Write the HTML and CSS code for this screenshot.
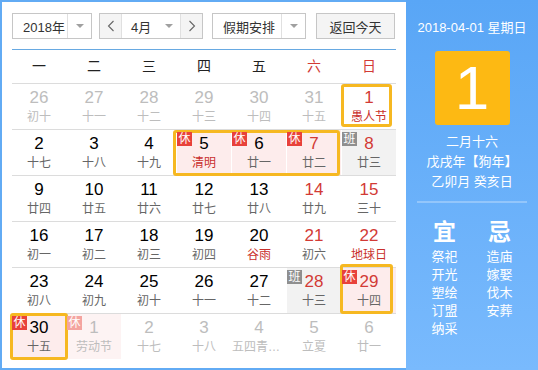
FILE: index.html
```html
<!DOCTYPE html>
<html lang="zh-CN">
<head>
<meta charset="utf-8">
<title>万年历</title>
<link rel="stylesheet" href="styles.css">
</head>
<body>
<div class="cal">
  <div class="main">
    <div class="toolbar">
      <div class="select year"><span class="sel-text">2018年</span><span class="sel-arrow"><i class="tri"></i></span></div>
      <div class="month">
        <span class="nav prev"><svg width="8" height="12" viewBox="0 0 8 12"><polyline points="6.5,1 1.5,6 6.5,11" fill="none" stroke="#666" stroke-width="1.1"/></svg></span>
        <span class="month-text">4月<i class="tri"></i></span>
        <span class="nav next"><svg width="8" height="12" viewBox="0 0 8 12"><polyline points="1.5,1 6.5,6 1.5,11" fill="none" stroke="#666" stroke-width="1.1"/></svg></span>
      </div>
      <div class="select holiday"><span class="sel-text">假期安排</span><span class="sel-arrow"><i class="tri"></i></span></div>
      <button class="today-btn">返回今天</button>
    </div>
    <div class="rule"></div>
    <div class="weekdays">
      <span>一</span><span>二</span><span>三</span><span>四</span><span>五</span><span class="red">六</span><span class="red">日</span>
    </div>

    <div class="week">
      <div class="d other"><b class="n">26</b><span class="l">初十</span></div>
      <div class="d other"><b class="n">27</b><span class="l">十一</span></div>
      <div class="d other"><b class="n">28</b><span class="l">十二</span></div>
      <div class="d other"><b class="n">29</b><span class="l">十三</span></div>
      <div class="d other"><b class="n">30</b><span class="l">十四</span></div>
      <div class="d other"><b class="n">31</b><span class="l">十五</span></div>
      <div class="d red fest"><i class="box box-a"></i><b class="n">1</b><span class="l">愚人节</span></div>
    </div>

    <div class="week">
      <div class="d"><b class="n">2</b><span class="l">十七</span></div>
      <div class="d"><b class="n">3</b><span class="l">十八</span></div>
      <div class="d"><b class="n">4</b><span class="l">十九</span></div>
      <div class="d rest fest"><i class="tag">休</i><b class="n">5</b><span class="l">清明</span></div>
      <div class="d rest"><i class="tag">休</i><b class="n">6</b><span class="l">廿一</span></div>
      <div class="d rest red"><i class="tag">休</i><b class="n">7</b><span class="l">廿二</span></div>
      <div class="d work red"><i class="tag ban">班</i><b class="n">8</b><span class="l">廿三</span></div>
      <i class="range"></i>
    </div>

    <div class="week">
      <div class="d"><b class="n">9</b><span class="l">廿四</span></div>
      <div class="d"><b class="n">10</b><span class="l">廿五</span></div>
      <div class="d"><b class="n">11</b><span class="l">廿六</span></div>
      <div class="d"><b class="n">12</b><span class="l">廿七</span></div>
      <div class="d"><b class="n">13</b><span class="l">廿八</span></div>
      <div class="d red"><b class="n">14</b><span class="l">廿九</span></div>
      <div class="d red"><b class="n">15</b><span class="l">三十</span></div>
    </div>

    <div class="week">
      <div class="d"><b class="n">16</b><span class="l">初一</span></div>
      <div class="d"><b class="n">17</b><span class="l">初二</span></div>
      <div class="d"><b class="n">18</b><span class="l">初三</span></div>
      <div class="d"><b class="n">19</b><span class="l">初四</span></div>
      <div class="d fest"><b class="n">20</b><span class="l">谷雨</span></div>
      <div class="d red"><b class="n">21</b><span class="l">初六</span></div>
      <div class="d red fest"><b class="n">22</b><span class="l">地球日</span></div>
    </div>

    <div class="week">
      <div class="d"><b class="n">23</b><span class="l">初八</span></div>
      <div class="d"><b class="n">24</b><span class="l">初九</span></div>
      <div class="d"><b class="n">25</b><span class="l">初十</span></div>
      <div class="d"><b class="n">26</b><span class="l">十一</span></div>
      <div class="d"><b class="n">27</b><span class="l">十二</span></div>
      <div class="d work red"><i class="tag ban">班</i><b class="n">28</b><span class="l">十三</span></div>
      <div class="d rest red"><i class="box box-b"></i><i class="tag">休</i><b class="n">29</b><span class="l">十四</span></div>
    </div>

    <div class="week last">
      <div class="d rest"><i class="box box-c"></i><i class="tag">休</i><b class="n">30</b><span class="l">十五</span></div>
      <div class="d other rest-faded"><i class="tag faded">休</i><b class="n">1</b><span class="l">劳动节</span></div>
      <div class="d other"><b class="n">2</b><span class="l">十七</span></div>
      <div class="d other"><b class="n">3</b><span class="l">十八</span></div>
      <div class="d other"><b class="n">4</b><span class="l">五四青年节</span></div>
      <div class="d other"><b class="n">5</b><span class="l">立夏</span></div>
      <div class="d other"><b class="n">6</b><span class="l">廿一</span></div>
    </div>
  </div>

  <div class="side">
    <div class="date">2018-04-01 星期日</div>
    <div class="big">1</div>
    <div class="lunar">
      <div>二月十六</div>
      <div>戊戌年【狗年】</div>
      <div>乙卯月 癸亥日</div>
    </div>
    <div class="sep"></div>
    <div class="yj">
      <div class="yj-col">
        <div class="yj-head">宜</div>
        <div class="yj-item">祭祀</div>
        <div class="yj-item">开光</div>
        <div class="yj-item">塑绘</div>
        <div class="yj-item">订盟</div>
        <div class="yj-item">纳采</div>
      </div>
      <div class="yj-col">
        <div class="yj-head">忌</div>
        <div class="yj-item">造庙</div>
        <div class="yj-item">嫁娶</div>
        <div class="yj-item">伐木</div>
        <div class="yj-item">安葬</div>
      </div>
    </div>
  </div>
</div>
</body>
</html>
```

FILE: styles.css
```css
* { box-sizing: border-box; margin: 0; padding: 0; }
html, body { width: 538px; height: 370px; overflow: hidden; background: #fff; }
body { font-family: "Liberation Sans", "Noto Sans CJK SC", sans-serif; color: #000; }

.cal { display: flex; width: 538px; height: 370px; }

.main {
  width: 407px;
  border: 2px solid #62abf4;
  border-right: 0;
  padding: 11px 10px 0;
}

/* toolbar */
.toolbar { display: flex; height: 26px; font-size: 13px; color: #333; margin-bottom: 10px; }
.select { display: flex; border: 1px solid #c6c6c6; background: #fff; }
.year { width: 80px; margin-right: 7px; }
.holiday { width: 94px; margin-right: 10px; }
.sel-text { flex: 1; display: flex; align-items: center; padding-left: 10px; }
.sel-arrow { width: 24px; border-left: 1px solid #e0e0e0; display: flex; align-items: center; justify-content: center; }
.tri { display: block; width: 0; height: 0; border-left: 4px solid transparent; border-right: 4px solid transparent; border-top: 4px solid #a0a0a0; }

.month { display: flex; width: 104px; margin-right: 9px; border: 1px solid #c6c6c6; }
.nav { width: 22px; background: #f4f4f4; display: flex; align-items: center; justify-content: center; }
.prev { border-right: 1px solid #e0e0e0; }
.next { border-left: 1px solid #e0e0e0; }
.month-text { flex: 1; display: flex; align-items: center; padding-left: 9px; gap: 14px; background: #fff; }

.today-btn {
  width: 79px; border: 1px solid #c6c6c6; background: #f4f4f4;
  font: inherit; font-size: 13px; color: #333;
}

.rule { height: 1px; background: #67a9e2; }

/* weekday header */
.weekdays {
  display: grid; grid-template-columns: repeat(7, minmax(0, 1fr)); column-gap: 1px;
  height: 34px; border-bottom: 1px solid #dcdcdc;
  font-size: 14px; line-height: 33px; text-align: center; color: #222;
}
.weekdays .red { color: #d23a35; }

/* weeks */
.week {
  position: relative;
  display: grid; grid-template-columns: repeat(7, minmax(0, 1fr)); column-gap: 1px;
  height: 46px; border-bottom: 1px solid #dcdcdc;
}
.week.last { border-bottom: 0; height: 45px; }

.d { position: relative; min-width: 0; text-align: center; padding-top: 4px; }
.n { display: block; font-weight: normal; font-size: 17px; line-height: 20px; color: #000; }
.l {
  display: block; font-size: 12px; line-height: 16px; margin-top: 1px; color: #666;
  white-space: nowrap; overflow: hidden; text-overflow: ellipsis; padding: 0;
}
.red .n { color: #d23a35; }
.fest .l { color: #c9302c; }
.other .n, .other .l { color: #bdbdbd; }
.rest { background: #fdecec; }
.rest-faded { background: #fdf3f3; }
.work { background: #f2f2f2; }

.tag {
  position: absolute; top: 2px; left: 0; z-index: 3;
  width: 15px; height: 14px;
  font-style: normal; font-size: 12px; line-height: 14px; text-align: center;
  color: #fff; background: #e8413b;
}
.tag.ban { background: #8f8f8f; }
.tag.faded { background: #f4a4a0; }

.box, .range {
  position: absolute; z-index: 2;
  border: 3px solid #f6b821; border-radius: 3px;
}
.range { grid-column: 4 / 7; grid-row: 1; top: 0; bottom: -1px; left: -4px; right: 1px; }
.box-a { top: 0; bottom: 2px; left: -1px; right: 4px; }
.box-b { top: -4px; bottom: -1px; left: -2px; right: 3px; }
.box-c { top: -1px; bottom: -1px; left: -2px; right: -2px; }

/* side panel */
.side {
  flex: 1;
  background: linear-gradient(#59a6f6, #79bafd);
  color: #fff; text-align: center;
  padding: 20px 11px 0;
}
.date { font-size: 13px; line-height: 16px; white-space: nowrap; }
.big {
  width: 75px; height: 74px; margin: 15px auto 0;
  background: #fdb913; border-radius: 3px;
  font-size: 62px; line-height: 74px;
}
.lunar { margin-top: 7px; font-size: 13px; line-height: 20px; }
.sep { height: 2px; margin-top: 9px; background: rgba(255, 255, 255, 0.28); }
.yj { display: flex; width: 110px; margin: 16px auto 0; }
.yj-col { width: 55px; }
.yj-head { font-size: 23px; font-weight: 700; line-height: 26px; margin-bottom: 3px; }
.yj-item { font-size: 13px; line-height: 18px; }
```
